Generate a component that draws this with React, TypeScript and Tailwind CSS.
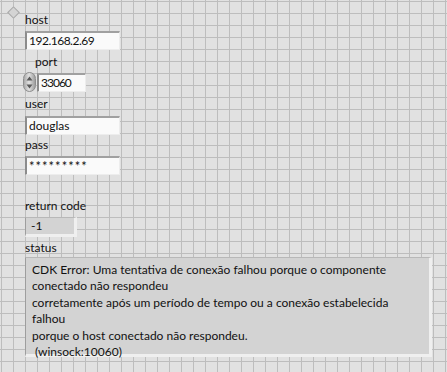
import React from "react";

function Field({ value, width, className = "" }: { value: string; width: string; className?: string }) {
  return (
    <div
      className={`${width} h-[19px] bg-[#fafafa] border-t-2 border-l-2 border-t-[#a0a0a0] border-l-[#8c8c8c] border-r border-b border-r-[#ededed] border-b-[#ededed] pl-[2px] text-[12px] leading-[16px] text-[#111] overflow-hidden whitespace-nowrap ${className}`}
    >
      {value}
    </div>
  );
}

export default function App() {
  return (
    <div className="relative w-[447px] h-[372px] overflow-hidden font-[Lato,sans-serif] bg-[#e1e1e1] bg-[linear-gradient(to_right,#bdbdbd_1px,transparent_1px),linear-gradient(to_bottom,#bdbdbd_1px,transparent_1px)] bg-[length:12px_12px] bg-[position:1px_1px]">
      {/* terminal diamond */}
      <div className="absolute left-[9px] top-[8px] w-[9px] h-[9px] rotate-45 bg-[#d4d4d4] border border-[#a8a8a8]" />

      <div className="flex flex-col pl-[25px] pt-[12px] text-[12px] text-[#111]">
        <div className="h-4 leading-4">host</div>
        <Field value="192.168.2.69" width="w-[95px]" className="mt-[3px] tracking-[-0.5px]" />

        <div className="h-4 leading-4 mt-[4px] pl-[10px]">port</div>
        <div className="flex items-center mt-[2px] -ml-[2px]">
          <div className="w-[13px] h-[20px] rounded-full bg-[linear-gradient(to_right,#a9a9a9,#e2e2e2_45%,#9d9d9d)] border border-[#8e8e8e] flex flex-col items-center justify-center gap-[3px]">
            <svg width="7" height="5" viewBox="0 0 7 5">
              <path d="M3.5 0.5 L6.5 4.5 L0.5 4.5 Z" fill="#5a5a5a" />
            </svg>
            <svg width="7" height="5" viewBox="0 0 7 5">
              <path d="M0.5 0.5 L6.5 0.5 L3.5 4.5 Z" fill="#5a5a5a" />
            </svg>
          </div>
          <Field value="33060" width="w-[49px]" className="ml-[1px] tracking-[-1px]" />
        </div>

        <div className="h-4 leading-4 mt-[4px]">user</div>
        <Field value="douglas" width="w-[95px]" className="mt-[4px]" />

        <div className="h-4 leading-4 mt-[2px]">pass</div>
        <Field value="*********" width="w-[95px]" className="mt-[3px] text-[13px] tracking-[1px]" />

        <div className="h-4 leading-4 mt-[23px]">return code</div>
        <div className="mt-[3px] w-[52px] h-[20px] bg-[#d3d3d3] border-t border-l border-t-[#b8b8b8] border-l-[#9e9e9e] border-r-[3px] border-b-[3px] border-r-[#efefef] border-b-[#efefef] pl-[5px] leading-[16px]">
          -1
        </div>

        <div className="h-4 leading-4 mt-[3px]">status</div>
        <div className="mt-[1px] w-[407px] h-[100px] bg-[#d3d3d3] border-t border-l border-t-[#b8b8b8] border-l-[#9e9e9e] border-r-[3px] border-b-[3px] border-r-[#efefef] border-b-[#efefef] pl-[6px] pt-[4px] leading-[16.4px] whitespace-pre">
          {"CDK Error: Uma tentativa de conexão falhou porque o componente\nconectado não respondeu\ncorretamente após um período de tempo ou a conexão estabelecida\nfalhou\nporque o host conectado não respondeu.\n (winsock:10060)"}
        </div>
      </div>
    </div>
  );
}
